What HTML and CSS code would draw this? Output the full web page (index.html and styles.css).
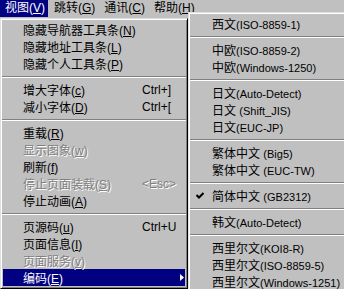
FILE: index.html
```html
<!DOCTYPE html>
<html lang="zh-CN">
<head>
  <meta charset="UTF-8" />
  <title>视图菜单</title>
  <link rel="stylesheet" href="styles.css">
</head>
<body>
  <!-- menu bar -->
  <div class="menubar">
    <span class="bar-item open">视图(<u>V</u>)</span>
    <span class="bar-item">跳转(<u>G</u>)</span>
    <span class="bar-item">通讯(<u>C</u>)</span>
    <span class="bar-item">帮助(<u>H</u>)</span>
  </div>

  <!-- 视图 dropdown -->
  <div class="menu view-menu">
    <div class="item"><span class="label">隐藏导航器工具条(<u>N</u>)</span></div>
    <div class="item"><span class="label">隐藏地址工具条(<u>L</u>)</span></div>
    <div class="item"><span class="label">隐藏个人工具条(<u>P</u>)</span></div>
    <div class="sep"></div>
    <div class="item"><span class="label">增大字体(<u>c</u>)</span><span class="key">Ctrl+]</span></div>
    <div class="item"><span class="label">减小字体(<u>D</u>)</span><span class="key">Ctrl+[</span></div>
    <div class="sep"></div>
    <div class="item"><span class="label">重载(<u>R</u>)</span></div>
    <div class="item disabled"><span class="label">显示图象(<u>w</u>)</span></div>
    <div class="item"><span class="label">刷新(<u>f</u>)</span></div>
    <div class="item disabled"><span class="label">停止页面装载(<u>S</u>)</span><span class="key">&lt;Esc&gt;</span></div>
    <div class="item"><span class="label">停止动画(<u>A</u>)</span></div>
    <div class="sep"></div>
    <div class="item"><span class="label">页源码(<u>u</u>)</span><span class="key">Ctrl+U</span></div>
    <div class="item"><span class="label">页面信息(<u>I</u>)</span></div>
    <div class="item disabled"><span class="label">页面服务(<u>v</u>)</span></div>
    <div class="item active">
      <span class="label">编码(<u>E</u>)</span>
      <svg class="arrow" width="4" height="7" viewBox="0 0 4 7"><polygon points="0,0 4,3.5 0,7" fill="#fff"/></svg>
    </div>
  </div>

  <!-- 编码 submenu -->
  <div class="menu encoding-menu">
    <div class="item"><span class="check"></span><span class="label">西文<span class="en">(ISO-8859-1)</span></span></div>
    <div class="sep"></div>
    <div class="item"><span class="check"></span><span class="label">中欧<span class="en">(ISO-8859-2)</span></span></div>
    <div class="item"><span class="check"></span><span class="label">中欧<span class="en">(Windows-1250)</span></span></div>
    <div class="sep"></div>
    <div class="item"><span class="check"></span><span class="label">日文<span class="en">(Auto-Detect)</span></span></div>
    <div class="item"><span class="check"></span><span class="label">日文 <span class="en">(Shift_JIS)</span></span></div>
    <div class="item"><span class="check"></span><span class="label">日文<span class="en">(EUC-JP)</span></span></div>
    <div class="sep"></div>
    <div class="item"><span class="check"></span><span class="label">繁体中文 <span class="en">(Big5)</span></span></div>
    <div class="item"><span class="check"></span><span class="label">繁体中文 <span class="en">(EUC-TW)</span></span></div>
    <div class="sep"></div>
    <div class="item">
      <span class="check"><svg width="8" height="7" viewBox="0 0 8 7"><polyline points="0.5,3 3,5.5 7.5,1" fill="none" stroke="#000" stroke-width="2"/></svg></span>
      <span class="label">简体中文 <span class="en">(GB2312)</span></span>
    </div>
    <div class="sep"></div>
    <div class="item"><span class="check"></span><span class="label">韩文<span class="en">(Auto-Detect)</span></span></div>
    <div class="sep"></div>
    <div class="item"><span class="check"></span><span class="label">西里尔文<span class="en">(KOI8-R)</span></span></div>
    <div class="item"><span class="check"></span><span class="label">西里尔文<span class="en">(ISO-8859-5)</span></span></div>
    <div class="item"><span class="check"></span><span class="label">西里尔文<span class="en">(Windows-1251)</span></span></div>
  </div>
</body>
</html>
```

FILE: styles.css
```css
/* classic 9x grey desktop */
body {
  margin: 0;
  height: 289px;
  overflow: hidden;
  position: relative;
  background: #c0c0c0;
  color: #000;
  font: 12px "Liberation Sans", "Noto Sans CJK SC", sans-serif;
}

u { text-decoration: underline; text-underline-offset: 1px; }

/* menu bar */
.menubar {
  display: flex;
  height: 18px;
}

.bar-item {
  height: 17px;
  line-height: 17px;
  padding: 0 3px 0 5px;
  margin-right: 1px;
  white-space: nowrap;
}
.bar-item.open {
  background: #000080;
  color: #fff;
}

/* popup menus */
.menu {
  position: absolute;
  background: #c0c0c0;
  border: 1px solid;
  border-color: #dfdfdf #000 #000 #dfdfdf;
  box-shadow: inset 1px 1px #fff, inset -1px -1px #808080;
  padding: 2px;
}

.view-menu {
  left: 0;
  top: 18px;
  width: 182px;
}

.encoding-menu {
  left: 188px;
  top: 12px;
  width: 160px;
}

.item {
  display: flex;
  align-items: center;
  height: 17px;
  white-space: nowrap;
}

.view-menu .item { padding-left: 20px; }
.encoding-menu .item { padding-left: 5px; }

.view-menu .label {
  flex: none;
  width: 119px;
}

.item.disabled {
  color: #808080;
  text-shadow: 1px 1px 0 #fff;
}

.item.active {
  background: #000080;
  color: #fff;
}

.arrow {
  margin-left: auto;
  margin-right: 1px;
}

.check {
  flex: none;
  width: 16px;
  display: flex;
  align-items: center;
}

.en { font-size: 11px; }

.sep {
  height: 9px;
  margin: 0 -1px;
  display: flex;
  align-items: center;
}
.sep::before {
  content: "";
  flex: 1;
  border-top: 1px solid #808080;
  border-bottom: 1px solid #fff;
}
```
